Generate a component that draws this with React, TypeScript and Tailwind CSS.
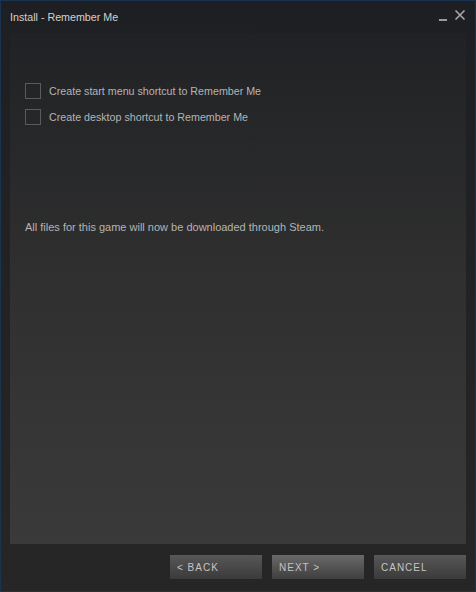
const Checkbox = ({ label }: { label: string }) => (
  <label className="flex items-center gap-[8px] h-[16px]">
    <span className="w-[16px] h-[16px] border border-[#5b5b5b] shrink-0" />
    <span className="text-[10.7px] text-[#b4b4b4]">{label}</span>
  </label>
);

const WizardButton = ({ text, active }: { text: string; active?: boolean }) => (
  <button
    className={
      "w-[92px] h-[24px] text-left pl-[7px] text-[10px] tracking-[1px] text-[#c4c4c4] " +
      (active
        ? "bg-gradient-to-b from-[#6a6a6a] to-[#3f3f3f]"
        : "bg-gradient-to-b from-[#575757] to-[#3b3b3b]")
    }
  >
    {text}
  </button>
);

export default function App() {
  return (
    <div
      className="w-[476px] h-[592px] flex flex-col border border-[#1a3450] bg-gradient-to-b from-[#1e1f22] to-[#262626]"
      style={{ fontFamily: '"Liberation Sans", Arial, sans-serif' }}
    >
      <div className="flex items-center justify-between h-[32px] pl-[9px] pr-[9px] shrink-0">
        <span className="text-[10.7px] text-[#d2d2d2]">Install - Remember Me</span>
        <div className="flex items-center gap-[6px] -mt-[4px]">
          <svg width="10" height="12" viewBox="0 0 10 12">
            <rect x="1" y="10" width="8" height="2" fill="#9a9a9a" />
          </svg>
          <svg width="12" height="12" viewBox="0 0 12 12">
            <path d="M1.5 1.5 L10.5 10.5 M10.5 1.5 L1.5 10.5" stroke="#a8a8a8" strokeWidth="1.6" />
          </svg>
        </div>
      </div>
      <div className="flex-1 mx-[9px] bg-gradient-to-b from-[#212225] via-[#303030] to-[#3a3a3a] px-[15px] pt-[50px]">
        <div className="flex flex-col gap-[10px]">
          <Checkbox label="Create start menu shortcut to Remember Me" />
          <Checkbox label="Create desktop shortcut to Remember Me" />
        </div>
        <p className="mt-[94px] text-[11px] text-[#b4b4b4]">
          All files for this game will now be downloaded through Steam.
        </p>
      </div>
      <div className="flex justify-end gap-[10px] h-[47px] pt-[11px] pr-[9px] shrink-0">
        <WizardButton text="< BACK" />
        <WizardButton text="NEXT >" active />
        <WizardButton text="CANCEL" />
      </div>
    </div>
  );
}
